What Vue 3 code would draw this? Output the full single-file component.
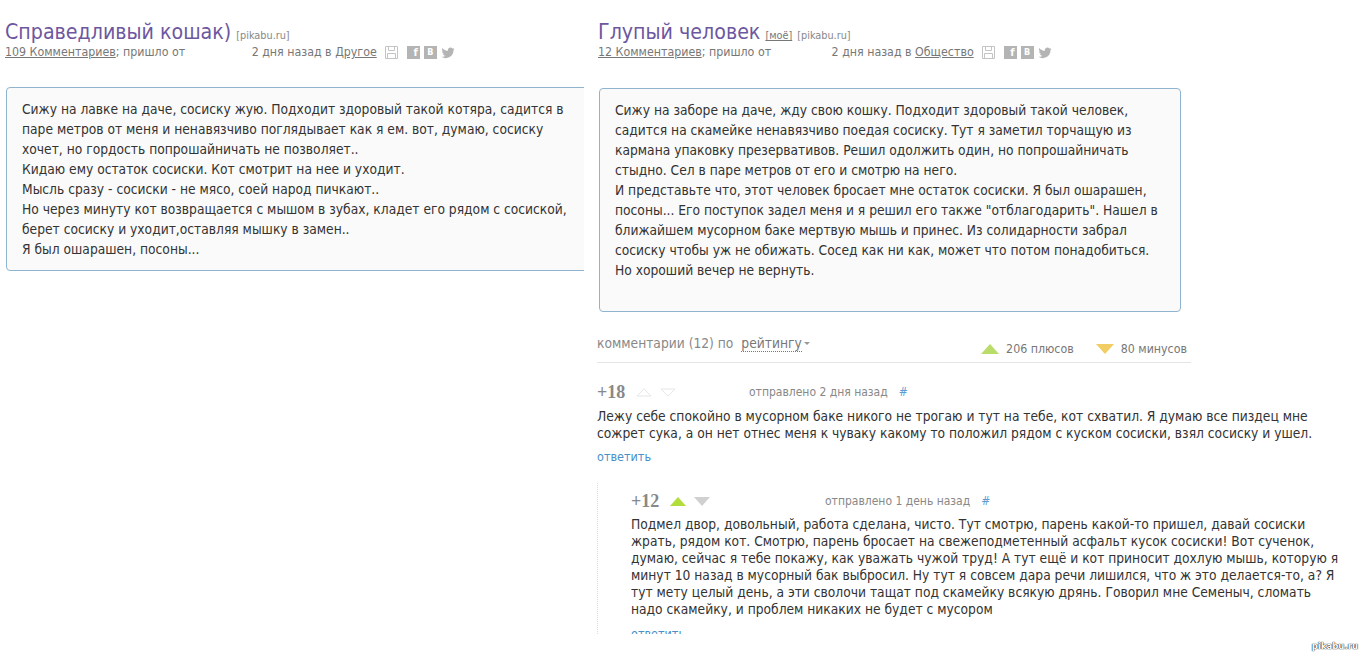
<script setup>
const leftLines = [
  'Сижу на лавке на даче, сосиску жую. Подходит здоровый такой котяра, садится в',
  'паре метров от меня и ненавязчиво поглядывает как я ем. вот, думаю, сосиску',
  'хочет, но гордость попрошайничать не позволяет..',
  'Кидаю ему остаток сосиски. Кот смотрит на нее и уходит.',
  'Мысль сразу - сосиски - не мясо, соей народ пичкают..',
  'Но через минуту кот возвращается с мышом в зубах, кладет его рядом с сосиской,',
  'берет сосиску и уходит,оставляя мышку в замен..',
  'Я был ошарашен, посоны...'
]
const rightLines = [
  'Сижу на заборе на даче, жду свою кошку. Подходит здоровый такой человек,',
  'садится на скамейке ненавязчиво поедая сосиску. Тут я заметил торчащую из',
  'кармана упаковку презервативов. Решил одолжить один, но попрошайничать',
  'стыдно. Сел в паре метров от его и смотрю на него.',
  'И представьте что, этот человек бросает мне остаток сосиски. Я был ошарашен,',
  'посоны... Его поступок задел меня и я решил его также "отблагодарить". Нашел в',
  'ближайшем мусорном баке мертвую мышь и принес. Из солидарности забрал',
  'сосиску чтобы уж не обижать. Сосед как ни как, может что потом понадобиться.',
  'Но хороший вечер не вернуть.'
]
const comment1 = [
  'Лежу себе спокойно в мусорном баке никого не трогаю и тут на тебе, кот схватил. Я думаю все пиздец мне',
  'сожрет сука, а он нет отнес меня к чуваку какому то положил рядом с куском сосиски, взял сосиску и ушел.'
]
const comment2 = [
  'Подмел двор, довольный, работа сделана, чисто. Тут смотрю, парень какой-то пришел, давай сосиски',
  'жрать, рядом кот. Смотрю, парень бросает на свежеподметенный асфальт кусок сосиски! Вот сученок,',
  'думаю, сейчас я тебе покажу, как уважать чужой труд! А тут ещё и кот приносит дохлую мышь, которую я',
  'минут 10 назад в мусорный бак выбросил. Ну тут я совсем дара речи лишился, что ж это делается-то, а? Я',
  'тут мету целый день, а эти сволочи тащат под скамейку всякую дрянь. Говорил мне Семеныч, сломать',
  'надо скамейку, и проблем никаких не будет с мусором'
]
</script>

<template>
  <div class="page">
    <div class="col col-left">
      <div class="head">
        <span class="title">Справедливый кошак)</span>
        <span class="src">[pikabu.ru]</span>
      </div>
      <div class="meta">
        <a class="lnk">109 Комментариев</a>; пришло от
        <span class="gap gap-left"></span>2 дня назад в <a class="lnk">Другое</a>
        <span class="icons">
          <svg class="ic-save" width="13" height="13" viewBox="0 0 13 13"><path d="M.5.5h12v12H.5zM3.500.5v4h6v-4M2.500 12.500v-5h8v5" fill="none" stroke="#c4c4c4"/></svg>
          <span class="sq sq-f">f</span>
          <span class="sq">В</span>
          <svg class="ic-tw" width="14" height="12" viewBox="0 0 15 12"><path d="M14.500 1.600c-.5.2-1 .4-1.600.4.6-.3 1-.9 1.200-1.500-.5.3-1.100.6-1.800.7C11.800.5 11 .1 10.200.1 8.600.1 7.300 1.400 7.300 3c0 .2 0 .4.100.7C5 3.600 2.900 2.400 1.500.6c-.8 1.400-.3 3 .9 3.900-.5 0-.9-.1-1.300-.4 0 1.400 1 2.600 2.300 2.900-.4.1-.9.1-1.300 0 .4 1.200 1.400 2 2.700 2C3.800 9.800 2.200 10.300.6 10.100 1.900 11 3.400 11.500 5 11.500c5.500 0 8.600-4.600 8.400-8.600.5-.4 1-.8 1.100-1.300z" fill="#b4b4b4"/></svg>
        </span>
      </div>
      <div class="story story-left">
        <div v-for="line in leftLines" :key="line" class="line">{{ line }}</div>
      </div>
    </div>

    <div class="col col-right">
      <div class="head">
        <span class="title">Глупый человек</span>
        <span class="src"><a class="lnk">[моё]</a></span>
        <span class="src">[pikabu.ru]</span>
      </div>
      <div class="meta">
        <a class="lnk">12 Комментариев</a>; пришло от
        <span class="gap gap-right"></span>2 дня назад в <a class="lnk">Общество</a>
        <span class="icons">
          <svg class="ic-save" width="13" height="13" viewBox="0 0 13 13"><path d="M.5.5h12v12H.5zM3.500.5v4h6v-4M2.500 12.500v-5h8v5" fill="none" stroke="#c4c4c4"/></svg>
          <span class="sq sq-f">f</span>
          <span class="sq">В</span>
          <svg class="ic-tw" width="14" height="12" viewBox="0 0 15 12"><path d="M14.500 1.600c-.5.2-1 .4-1.600.4.6-.3 1-.9 1.200-1.500-.5.3-1.100.6-1.800.7C11.800.5 11 .1 10.200.1 8.600.1 7.300 1.400 7.300 3c0 .2 0 .4.100.7C5 3.600 2.900 2.400 1.500.6c-.8 1.400-.3 3 .9 3.900-.5 0-.9-.1-1.300-.4 0 1.400 1 2.600 2.300 2.900-.4.1-.9.1-1.300 0 .4 1.200 1.400 2 2.700 2C3.800 9.800 2.200 10.300.6 10.100 1.900 11 3.400 11.500 5 11.500c5.500 0 8.600-4.600 8.400-8.600.5-.4 1-.8 1.100-1.300z" fill="#b4b4b4"/></svg>
        </span>
      </div>
      <div class="story story-right">
        <div v-for="line in rightLines" :key="line" class="line">{{ line }}</div>
      </div>

      <div class="com-head">
        <div class="com-title">комментарии (12) по <span class="sort">рейтингу</span><span class="caret"></span></div>
        <div class="totals">
          <span class="tri tri-up"></span><span class="tot-num">206 плюсов</span>
          <span class="tri tri-down"></span><span class="tot-num">80 минусов</span>
        </div>
      </div>

      <div class="comment">
        <div class="com-meta">
          <span class="rate">+18</span>
          <svg class="vote" width="16" height="9" viewBox="0 0 16 9"><path d="M8 .8 15 8H1z" fill="none" stroke="#e6e6e6"/></svg>
          <svg class="vote" width="16" height="9" viewBox="0 0 16 9"><path d="M8 8.200 15 1H1z" fill="none" stroke="#e6e6e6"/></svg>
          <span class="sent sent-1">отправлено 2 дня назад</span>
          <span class="hash">#</span>
        </div>
        <div class="com-text">
          <div v-for="line in comment1" :key="line" class="line">{{ line }}</div>
        </div>
        <a class="reply">ответить</a>
      </div>

      <div class="comment nested">
        <div class="com-meta">
          <span class="rate">+12</span>
          <svg class="vote" width="16" height="9" viewBox="0 0 16 9"><path d="M8 0 16 9H0z" fill="#b2dd3c"/></svg>
          <svg class="vote" width="16" height="9" viewBox="0 0 16 9"><path d="M8 9 16 0H0z" fill="#d0d0d0"/></svg>
          <span class="sent sent-2">отправлено 1 день назад</span>
          <span class="hash">#</span>
        </div>
        <div class="com-text">
          <div v-for="line in comment2" :key="line" class="line">{{ line }}</div>
        </div>
        <a class="reply reply-nested">ответить</a>
      </div>
    </div>

    <div class="mark">pikabu.ru</div>
  </div>
</template>

<style>
html, body {
  margin: 0;
  background: #fff;
}
</style>

<style scoped>
.page {
  position: relative;
  display: flex;
  width: 1360px;
  height: 652px;
  overflow: hidden;
  background: #fff;
  font-family: "DejaVu Sans", "Noto Sans", sans-serif;
  font-stretch: condensed;
  color: #444;
}
.col-left {
  width: 579px;
  margin-left: 5px;
  overflow: hidden;
  flex: none;
}
.col-right {
  width: 750px;
  margin-left: 14px;
  flex: none;
}
.head {
  height: 26px;
  margin-top: 19px;
  display: flex;
  align-items: baseline;
  white-space: nowrap;
}
.title {
  font-size: 21.2px;
  line-height: 26px;
  color: #6c57a0;
}
.src {
  font-size: 10.8px;
  color: #888;
  margin-left: 5px;
}
.meta {
  font-size: 12.3px;
  line-height: 14px;
  color: #777;
  white-space: nowrap;
}
.lnk {
  color: #777;
  text-decoration: underline;
}
.gap {
  display: inline-block;
}
.gap-left {
  width: 63px;
}
.gap-right {
  width: 57px;
}
.icons {
  display: inline-flex;
  align-items: center;
  vertical-align: -3px;
  margin-left: 8px;
}
.ic-save {
  margin-right: 9px;
}
.sq {
  width: 13px;
  height: 13px;
  margin-right: 4px;
  background: #b4b4b4;
  color: #fff;
  font-size: 9px;
  font-weight: 700;
  line-height: 13px;
  text-align: center;
}
.sq-f {
  font-size: 11px;
  text-align: right;
  padding-right: 2px;
  width: 11px;
}
.story {
  background: #fafafa;
  border: 1px solid #8fb4d0;
  border-radius: 4px;
  font-size: 13.7px;
  line-height: 20px;
  color: #333;
  white-space: nowrap;
  box-sizing: border-box;
}
.story-left {
  margin: 28px 0 0 1px;
  width: 600px;
  height: 184px;
  padding: 11px 0 0 15px;
}
.story-right {
  margin-top: 29px;
  margin-left: 1px;
  width: 582px;
  height: 224px;
  padding: 11px 0 0 15px;
}
.com-head {
  display: flex;
  justify-content: space-between;
  align-items: flex-end;
  width: 594px;
  height: 40px;
  margin-top: 11px;
  margin-left: -1px;
  padding-bottom: 6px;
  border-bottom: 1px solid #e5e5e5;
  box-sizing: border-box;
  white-space: nowrap;
}
.com-title {
  font-size: 13.7px;
  line-height: 18px;
  color: #888;
  margin-bottom: 4px;
}
.sort {
  margin-left: 4px;
  border-bottom: 1px dotted #777;
  color: #777;
}
.caret {
  display: inline-block;
  margin-left: 2px;
  vertical-align: 3px;
  border-left: 3px solid transparent;
  border-right: 3px solid transparent;
  border-top: 3px solid #999;
}
.totals {
  display: flex;
  align-items: center;
  margin-right: 4px;
}
.tri {
  width: 0;
  height: 0;
  border-left: 9px solid transparent;
  border-right: 9px solid transparent;
}
.tri-up {
  border-bottom: 10px solid #b9dc6a;
}
.tri-down {
  margin-left: 22px;
  border-top: 10px solid #f2cd63;
}
.tot-num {
  font-size: 12.3px;
  color: #777;
  margin-left: 7px;
}
.comment {
  white-space: nowrap;
  margin-left: -1px;
}
.com-meta {
  display: flex;
  align-items: center;
  height: 20px;
  margin-top: 19px;
}
.rate {
  font-family: "Liberation Serif", serif;
  font-weight: 700;
  font-size: 18px;
  color: #888;
  width: 39px;
}
.vote {
  margin-right: 8px;
}
.sent {
  font-size: 12px;
  color: #888;
}
.sent-1 {
  margin-left: 65px;
}
.sent-2 {
  margin-left: 107px;
}
.hash {
  font-size: 12px;
  color: #5d9bd0;
  margin-left: 11px;
}
.com-text {
  font-size: 13.7px;
  line-height: 17px;
  color: #333;
  margin-top: 6px;
}
.reply {
  display: block;
  font-size: 12.5px;
  line-height: 16px;
  margin-top: 7px;
  color: #4a90c8;
}
.nested {
  margin-top: 18px;
  margin-left: -1px;
  padding-left: 33px;
  border-left: 1px dotted #ddd;
  height: 151px;
  overflow: hidden;
}
.nested .com-meta {
  margin-top: 8px;
}
.nested .com-text {
  margin-top: 5px;
}
.reply-nested {
  margin-top: 8px;
}
.mark {
  position: absolute;
  right: 2px;
  bottom: 1px;
  font-size: 9.5px;
  font-weight: 700;
  color: #fff;
  text-shadow: 0 0 1px #000, 0 0 1px #000;
}
</style>
